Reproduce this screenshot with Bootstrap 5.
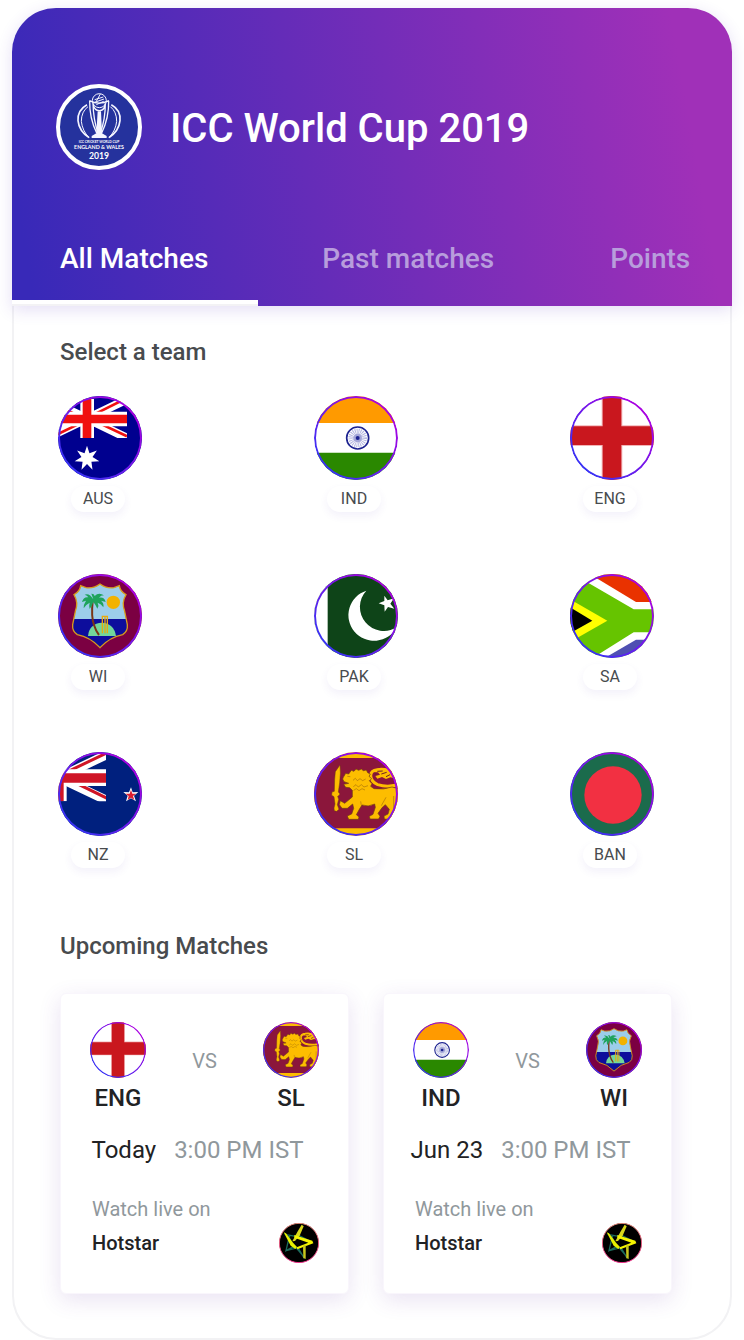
<!DOCTYPE html>
<html lang="en">
<head>
<meta charset="utf-8">
<meta name="viewport" content="width=device-width, initial-scale=1">
<title>ICC World Cup 2019</title>
<link href="https://cdn.jsdelivr.net/npm/bootstrap@5.3.0/dist/css/bootstrap.min.css" rel="stylesheet">
<style>
  body { font-family: Roboto, "Liberation Sans", sans-serif; background: #fff; color: #212224; padding: 8px 12px 0; }
  .hero { background: linear-gradient(80deg, #3829b8 3%, #a030b8 92%); border-radius: 44px 44px 0 0; padding-top: 76px; box-shadow: 0 4px 16px rgba(90, 50, 190, .16); }
  .hero-brand { padding: 0 44px; gap: 28px; }
  .hero-logo { width: 86px; height: 86px; }
  .hero-title { font-size: 40px; line-height: 48px; font-weight: 500; padding-top: 4px; }
  .tabs { margin-top: 71px; padding-bottom: 2px; }
  .tabs .nav-link { font-size: 28px; line-height: 36px; font-weight: 500; color: #b89ddc; padding: 0 0 23px; border-bottom: 4px solid transparent; white-space: nowrap; border-radius: 0; }
  .tabs .nav-link.active { color: #fff; border-color: #fff; padding-left: 48px; padding-right: 50px; box-shadow: 0 2px 0 #f3f2f5; }
  .tabs .tab-past { padding-left: 64px; padding-right: 64px; }
  .tabs .tab-points { padding-left: 52px; }
  .sheet { border: 2px solid #f2f2f4; border-top: 0; border-radius: 0 0 44px 44px; padding: 30px 58px 44px 46px; }
  .section-title { font-size: 24px; line-height: 32px; font-weight: 500; color: #484b4e; margin: 0; }
  .teams { display: grid; grid-template-columns: repeat(3, 84px); justify-content: space-between; row-gap: 62px; margin: 28px 18px 62px -2px; }
  .team { background: none; width: 84px; }
  .flag { display: block; border-radius: 50%; }
  .flag-lg { width: 84px; height: 84px; }
  .flag-sm { width: 56px; height: 56px; }
  .pill { display: block; width: 54px; height: 26px; margin: 6px 0 0 13px; border-radius: 13px; background: #fff; font-size: 16px; line-height: 26px; color: #484b4e; text-align: center; box-shadow: 0 4px 8px rgba(90, 50, 190, .07); }
  .matches { display: grid; grid-template-columns: repeat(2, minmax(0, 1fr)); gap: 34px; margin-top: 31px; }
  .match { border: 1px solid #f9f6fc; border-radius: 6px; padding: 28px 29px 30px; background: #fff; box-shadow: 0 6px 22px rgba(100, 50, 160, .14); }
  .match-code { font-size: 24px; line-height: 32px; font-weight: 500; margin-top: 4px; }
  .versus { font-size: 20px; line-height: 24px; margin-top: 27px; }
  .soft { color: #90989c; }
  .match-time { font-size: 24px; line-height: 32px; margin-top: 20px; padding-right: 14px; gap: 18px; white-space: nowrap; }
  .watch { font-size: 20px; line-height: 24px; margin-top: 31px; padding-left: 2px; }
  .channel { font-size: 20px; line-height: 24px; font-weight: 500; margin-top: 2px; padding-left: 2px; }
  .channel a { color: inherit; }
  .channel svg { width: 40px; height: 40px; }
</style>
</head>
<body>

<svg width="0" height="0" class="position-absolute" aria-hidden="true">
  <defs>
    <linearGradient id="ringFill" x1="0" y1="1" x2="1" y2="0"><stop offset=".12" stop-color="#3533f5"/><stop offset=".88" stop-color="#ad00e0"/></linearGradient>
    <linearGradient id="hotRing" x1="0" y1="1" x2="0" y2="0"><stop offset="0" stop-color="#f0348c"/><stop offset="1" stop-color="#d98474"/></linearGradient>
    <circle id="ring" cx="150" cy="144" r="123" fill="none" stroke="url(#ringFill)" stroke-width="6"/>
    <clipPath id="ausJack"><path d="M-9 27H231V144H-9z"/></clipPath>
    <clipPath id="nzJack"><path d="M-90 24H168V166H-90z"/></clipPath>
    <clipPath id="shield"><path d="M72 80Q90 70 92 53L108 59Q132 62 150 48Q168 62 192 59L208 53Q210 70 228 80Q214 103 224 130L232 170Q234 190 218 200Q180 207 150 239Q120 207 82 200Q66 190 68 170L76 130Q86 103 72 80z"/></clipPath>

    <symbol id="aus" viewBox="24 18 252 252">
      <path fill="#00008f" d="M24 18h252v252H24z"/>
      <g clip-path="url(#ausJack)">
        <path stroke="#fff" stroke-width="25" d="M-9 28L231 144M-9 144L231 28"/>
        <path stroke="#f01010" stroke-width="8" d="M-9 32L111 90M115 82L231 24M107 92L-9 148M111 82L231 139"/>
        <path fill="#fff" d="M91 18h41v130H91zM-9 65h240v44H-9z"/>
        <path fill="#f01010" d="M98 18h26v130H98zM-9 74h240v26H-9z"/>
      </g>
      <path fill="#fff" d="M111 167L118.400 189.700 140.700 181.300 127.600 201.200 148 213.500 124.300 215.600 127.500 239.200 111 222 94.500 239.200 97.700 215.600 74 213.500 94.400 201.200 81.300 181.300 103.600 189.700z"/>
      <use href="#ring"/>
    </symbol>

    <symbol id="ind" viewBox="24 18 252 252">
      <path fill="#fff" d="M24 18h252v252H24z"/><path fill="#ff9a00" d="M24 18h252v81H24z"/><path fill="#2a8800" d="M24 188h252v82H24z"/>
      <circle cx="155" cy="144" r="33" fill="#fff" stroke="#1d2390" stroke-width="5"/>
      <circle cx="155" cy="144" r="15" fill="none" stroke="#b4b7e0" stroke-width="26" stroke-dasharray="2 1.93"/>
      <circle cx="155" cy="144" r="13" fill="#8084c8" opacity=".6"/>
      <circle cx="155" cy="144" r="6" fill="#1d2390"/>
      <use href="#ring"/>
    </symbol>

    <symbol id="eng" viewBox="24 18 252 252">
      <path fill="#fff" d="M24 18h252v252H24z"/><path fill="#f2b4b6" d="M119 18h62v252h-62zM24 106h252v62H24z"/>
      <path fill="#c9171e" d="M122 18h56v252h-56zM24 109h252v56H24z"/>
      <use href="#ring"/>
    </symbol>

    <symbol id="wi" viewBox="24 18 252 252">
      <path fill="#7b0042" d="M24 18h252v252H24z"/>
      <g clip-path="url(#shield)">
        <path fill="#9ccdea" d="M60 40h180v113H60z"/><path fill="#0d0d9c" d="M60 153h180v90H60z"/>
        <path fill="#72d69b" d="M114 204q4-38 42-40 36 2 42 40z"/>
      </g>
      <path fill="none" stroke="#d79a1c" stroke-width="4" d="M72 80Q90 70 92 53L108 59Q132 62 150 48Q168 62 192 59L208 53Q210 70 228 80Q214 103 224 130L232 170Q234 190 218 200Q180 207 150 239Q120 207 82 200Q66 190 68 170L76 130Q86 103 72 80z"/>
      <circle cx="190" cy="103" r="20" fill="#f2b200"/>
      <path fill="none" stroke="#7a3416" stroke-width="6" d="M128 100Q123 145 132 171Q138 190 147 201"/>
      <path fill="#1fa35c" d="M130 94Q118 74 104 80Q112 82 115 88Q100 86 96 102L108 98Q100 110 101 121Q108 109 119 104Q116 114 119 123Q126 115 130 102Q138 112 142 122Q148 113 143 104Q154 108 160 118Q163 106 153 98L167 102Q163 86 147 89Q152 82 162 82Q146 72 134 84Q132 76 124 77z"/>
      <path fill="none" stroke="#e8aa10" stroke-width="4" d="M157 196v-51h15v51M165 145v51"/>
      <use href="#ring"/>
    </symbol>

    <symbol id="pak" viewBox="24 18 252 252">
      <path fill="#0e4418" d="M24 18h252v252H24z"/><path fill="#fff" d="M24 18h41v252H24z"/>
      <path fill="#fff" d="M181 68A77 77 0 1 0 272 178A72 72 0 0 1 181 68z"/>
      <path fill="#fff" d="M235 83l10 14 19-6-11 16 12 15-19-5-10 14-1-19-17-6 17-7z"/>
      <use href="#ring"/>
    </symbol>

    <symbol id="sa" viewBox="24 18 252 252">
      <path fill="#66c400" d="M24 18h252v252H24z"/>
      <path fill="#fff" d="M33 18L215 124H276V18zM92 270L215 193H276V270z"/>
      <path fill="#e93200" d="M83 18L222 102H276V18z"/>
      <path fill="#4f50b2" d="M128 270L222 215H276V270z"/>
      <path fill="#ff0" d="M24 94L136 158L24 222z"/><path fill="#000" d="M24 118L91 158L24 196z"/>
      <use href="#ring"/>
    </symbol>

    <symbol id="nz" viewBox="24 18 252 252">
      <path fill="#00207e" d="M24 18h252v252H24z"/>
      <g clip-path="url(#nzJack)">
        <path stroke="#fff" stroke-width="27" d="M26 95L178 22M26 95L178 167"/>
        <path stroke="#cf1526" stroke-width="9" d="M30 88L178 17M55 100L178 160"/>
        <path fill="#fff" d="M24 70h144v50H50v46H24z"/><path fill="#cf1526" d="M24 82h144v28H41v56H24z"/>
      </g>
      <path fill="#fff" d="M243 124l5 15 17-1-13 11 6 17-15-9-15 9 5-17-13-11 17 1z"/>
      <path fill="#dc1e30" d="M243 131l4 12 12 0-10 7 4 12-10-7-10 7 3-12-10-7 13 0z"/>
      <use href="#ring"/>
    </symbol>

    <symbol id="sl" viewBox="24 18 252 252">
      <path fill="#fdbd00" d="M24 18h252v252H24z"/><path fill="#8b163b" d="M24 36h252v211H24z"/>
      <path fill="#fdbd00" stroke="#70420f" stroke-width="1.5" d="M102 57Q105 80 101 110L97 138L102 144 98 149 95 151 98 160 94 176 99 190 92 196 85 194 84 186 87 174 84 152 77 148 78 138 85 136 86 100 88 77z"/>
      <path fill="none" stroke="#fdbd00" stroke-width="9" d="M270 118Q240 124 215 116Q196 108 194 90Q194 72 214 71Q240 66 262 82"/>
      <path fill="#fdbd00" d="M196 78L210 68 240 68 264 84 268 98 254 94 240 99 228 93 214 98 208 90 222 86 216 79z"/>
      <path fill="#fdbd00" stroke="#70420f" stroke-width="2" d="M112 94L119 82L128 84L136 73L144 76L150 69L158 73L166 69L172 74L181 72L185 80L193 84L189 91L197 98L190 104L198 113L194 121L204 128Q234 132 258 123L278 128L278 222L235 219L234 210L246 204L250 190L238 176L229 184L216 202L222 211L218 219L192 219L190 211L201 205L208 184L206 174Q188 184 168 177L160 190L151 206L159 213L157 220L128 220L124 210L137 204L143 187L140 174L124 187L108 187L100 176L103 164L116 172L139 153L139 133L131 125L119 124L113 115L128 112L114 107L110 99z"/>
      <path fill="none" stroke="#8f5a0c" stroke-width="1.500" d="M124 91l9 1M141 103l7-6 6 7 8-6 8 6 9-5M142 122l8-6 7 7 9-7 8 7 12-4M143 133l8-5 8 6 9-6 9 4M166 178l-2-12M226 179l14-25M263 150v40"/>
      <path fill="none" stroke="#6b1f28" stroke-width="3" d="M214 76l16-1M226 84l16-5M240 92l12-6M206 84l8 0"/>
      <use href="#ring"/>
    </symbol>

    <symbol id="ban" viewBox="24 18 252 252">
      <path fill="#1b6b4c" d="M24 18h252v252H24z"/><circle cx="153" cy="147" r="86" fill="#f23042"/>
      <use href="#ring"/>
    </symbol>

    <symbol id="hotstar" viewBox="838 729 120 120">
      <circle cx="898" cy="789" r="59" fill="#000" stroke="url(#hotRing)" stroke-width="3"/>
      <path fill="none" stroke="#1c6b5c" stroke-width="4" d="M855 763L892 770M870 765L859 812L882 800M859 812L895 803L914 835M884 803L866 768M889 803L914 832M897 766L932 784"/>
      <path fill="#d9d91c" d="M906 734L912 739 900 767 886 783 878 784 893 756z"/>
      <path fill="#e6f000" d="M852 757L859 760 880 788 892 801 887 807 873 797z"/>
      <path fill="#f5f500" d="M884 765L938 782 941 790 893 808 891 802 926 788 884 773z"/>
      <path fill="#c8c71c" d="M910 797L918 794 918 837 911 834z"/>
    </symbol>
  </defs>
</svg>

<header class="hero position-relative text-white">
  <div class="hero-brand d-flex align-items-center">
    <svg class="hero-logo flex-shrink-0" viewBox="18 18 258 258" role="img" aria-label="ICC Cricket World Cup England and Wales 2019">
      <circle cx="147" cy="147" r="123" fill="#25329d" stroke="#fff" stroke-width="12"/>
      <g fill="none" stroke="#f4f5ff">
        <circle cx="148" cy="68" r="21" stroke-width="3"/>
        <path stroke-width="3" d="M134 65l26-8M134 73l28-10M139 80l22-10M151 48l-12 22"/>
        <path stroke-width="4" d="M118 68Q147 83 177 68M119 69Q118 120 140 165M176 69Q177 120 155 165M129 76Q130 125 144 165M166 76Q166 125 151 165M130 80Q133 98 148 98Q163 98 165 80"/>
        <path stroke-width="5" d="M111 80Q82 96 84 128Q87 159 117 179M184 80Q213 96 210 128Q207 159 177 179"/>
        <path stroke-width="3" d="M114 86Q94 101 94 130Q97 158 117 179M181 86Q200 101 200 130Q197 158 177 179"/>
      </g>
      <path fill="#f4f5ff" d="M143 100h10l3 66 14 8v6h-45v-6l14-8z"/>
      <g fill="#fff" text-anchor="middle" font-family="Lato, sans-serif" font-weight="700">
        <text x="147" y="194" font-size="10">ICC CRICKET WORLD CUP</text>
        <text x="147" y="213" font-size="16">ENGLAND &amp; WALES</text>
        <text x="147" y="242" font-size="26">2019</text>
      </g>
    </svg>
    <h1 class="hero-title mb-0">ICC World Cup 2019</h1>
  </div>
  <nav class="tabs nav flex-nowrap overflow-hidden" aria-label="Matches">
    <a class="nav-link active" aria-current="page" href="#all">All Matches</a>
    <a class="nav-link tab-past" href="#past">Past matches</a>
    <a class="nav-link tab-points" href="#points">Points</a>
  </nav>
</header>

<main class="sheet" id="all">
  <h2 class="section-title">Select a team</h2>
  <div class="teams">
    <button type="button" class="team border-0 p-0"><svg class="flag flag-lg" aria-hidden="true"><use href="#aus"/></svg><span class="pill">AUS</span></button>
    <button type="button" class="team border-0 p-0"><svg class="flag flag-lg" aria-hidden="true"><use href="#ind"/></svg><span class="pill">IND</span></button>
    <button type="button" class="team border-0 p-0"><svg class="flag flag-lg" aria-hidden="true"><use href="#eng"/></svg><span class="pill">ENG</span></button>
    <button type="button" class="team border-0 p-0"><svg class="flag flag-lg" aria-hidden="true"><use href="#wi"/></svg><span class="pill">WI</span></button>
    <button type="button" class="team border-0 p-0"><svg class="flag flag-lg" aria-hidden="true"><use href="#pak"/></svg><span class="pill">PAK</span></button>
    <button type="button" class="team border-0 p-0"><svg class="flag flag-lg" aria-hidden="true"><use href="#sa"/></svg><span class="pill">SA</span></button>
    <button type="button" class="team border-0 p-0"><svg class="flag flag-lg" aria-hidden="true"><use href="#nz"/></svg><span class="pill">NZ</span></button>
    <button type="button" class="team border-0 p-0"><svg class="flag flag-lg" aria-hidden="true"><use href="#sl"/></svg><span class="pill">SL</span></button>
    <button type="button" class="team border-0 p-0"><svg class="flag flag-lg" aria-hidden="true"><use href="#ban"/></svg><span class="pill">BAN</span></button>
  </div>

  <h2 class="section-title">Upcoming Matches</h2>
  <div class="matches">
    <article class="match">
      <div class="d-flex justify-content-between align-items-start">
        <div class="d-flex flex-column align-items-center"><svg class="flag flag-sm" aria-hidden="true"><use href="#eng"/></svg><div class="match-code">ENG</div></div>
        <div class="versus soft">VS</div>
        <div class="d-flex flex-column align-items-center"><svg class="flag flag-sm" aria-hidden="true"><use href="#sl"/></svg><div class="match-code">SL</div></div>
      </div>
      <div class="match-time d-flex justify-content-center"><span>Today</span><span class="soft">3:00 PM IST</span></div>
      <div class="watch soft">Watch live on</div>
      <div class="channel d-flex justify-content-between align-items-center"><a class="text-decoration-none" href="#hotstar-live">Hotstar</a><svg aria-hidden="true"><use href="#hotstar"/></svg></div>
    </article>
    <article class="match">
      <div class="d-flex justify-content-between align-items-start">
        <div class="d-flex flex-column align-items-center"><svg class="flag flag-sm" aria-hidden="true"><use href="#ind"/></svg><div class="match-code">IND</div></div>
        <div class="versus soft">VS</div>
        <div class="d-flex flex-column align-items-center"><svg class="flag flag-sm" aria-hidden="true"><use href="#wi"/></svg><div class="match-code">WI</div></div>
      </div>
      <div class="match-time d-flex justify-content-center"><span>Jun 23</span><span class="soft">3:00 PM IST</span></div>
      <div class="watch soft">Watch live on</div>
      <div class="channel d-flex justify-content-between align-items-center"><a class="text-decoration-none" href="#hotstar-live">Hotstar</a><svg aria-hidden="true"><use href="#hotstar"/></svg></div>
    </article>
  </div>
</main>

<script src="https://cdn.jsdelivr.net/npm/bootstrap@5.3.0/dist/js/bootstrap.bundle.min.js"></script>
</body>
</html>
